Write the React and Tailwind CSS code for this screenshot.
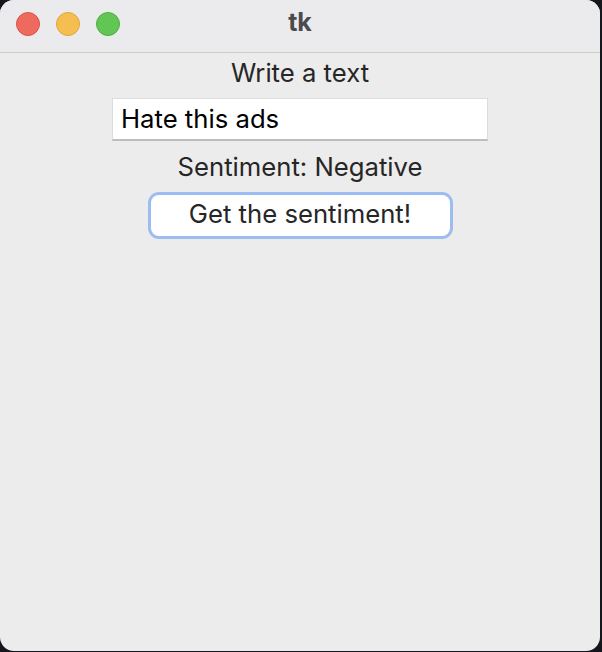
export default function App() {
  const font = { fontFamily: 'Inter, "Noto Sans", sans-serif' };
  return (
    <div className="w-[602px] h-[652px] bg-[#15151d]" style={font}>
      <div className="w-[600px] h-[651px] rounded-[14px] bg-[#ececec] overflow-hidden flex flex-col">
        <div className="h-[53px] shrink-0 bg-[#ebebed] border-b border-[#cbcbcb] grid grid-cols-[1fr_auto_1fr] items-center">
          <div className="flex items-center gap-4 pl-4 pb-[5px]">
            <span className="w-6 h-6 rounded-full bg-[#ee6a5f] border border-[#d9534a]" />
            <span className="w-6 h-6 rounded-full bg-[#f6be50] border border-[#dea537]" />
            <span className="w-6 h-6 rounded-full bg-[#62c655] border border-[#50ad43]" />
          </div>
          <div className="text-[25px] font-bold text-[#4b4b4b] pb-[7px]">tk</div>
          <div />
        </div>
        <div className="flex flex-col items-center text-[25.7px]">
          <div className="leading-[40px] text-[#262626]">Write a text</div>
          <div className="mt-[5px] w-[376px] h-[43px] bg-white border-l border-t border-r border-[#dcdcdc] border-b-2 border-b-[#bdbdbd] flex items-center px-[8px] text-black">
            Hate this ads
          </div>
          <div className="leading-[51px] text-[#262626]">Sentiment: Negative</div>
          <div className="w-[305px] h-[47px] rounded-[11px] bg-[#9dbdf2] p-[3px]">
            <div className="w-full h-full rounded-[8px] bg-white flex items-center justify-center pb-[2px] text-[#262626]">
              Get the sentiment!
            </div>
          </div>
        </div>
      </div>
    </div>
  );
}
